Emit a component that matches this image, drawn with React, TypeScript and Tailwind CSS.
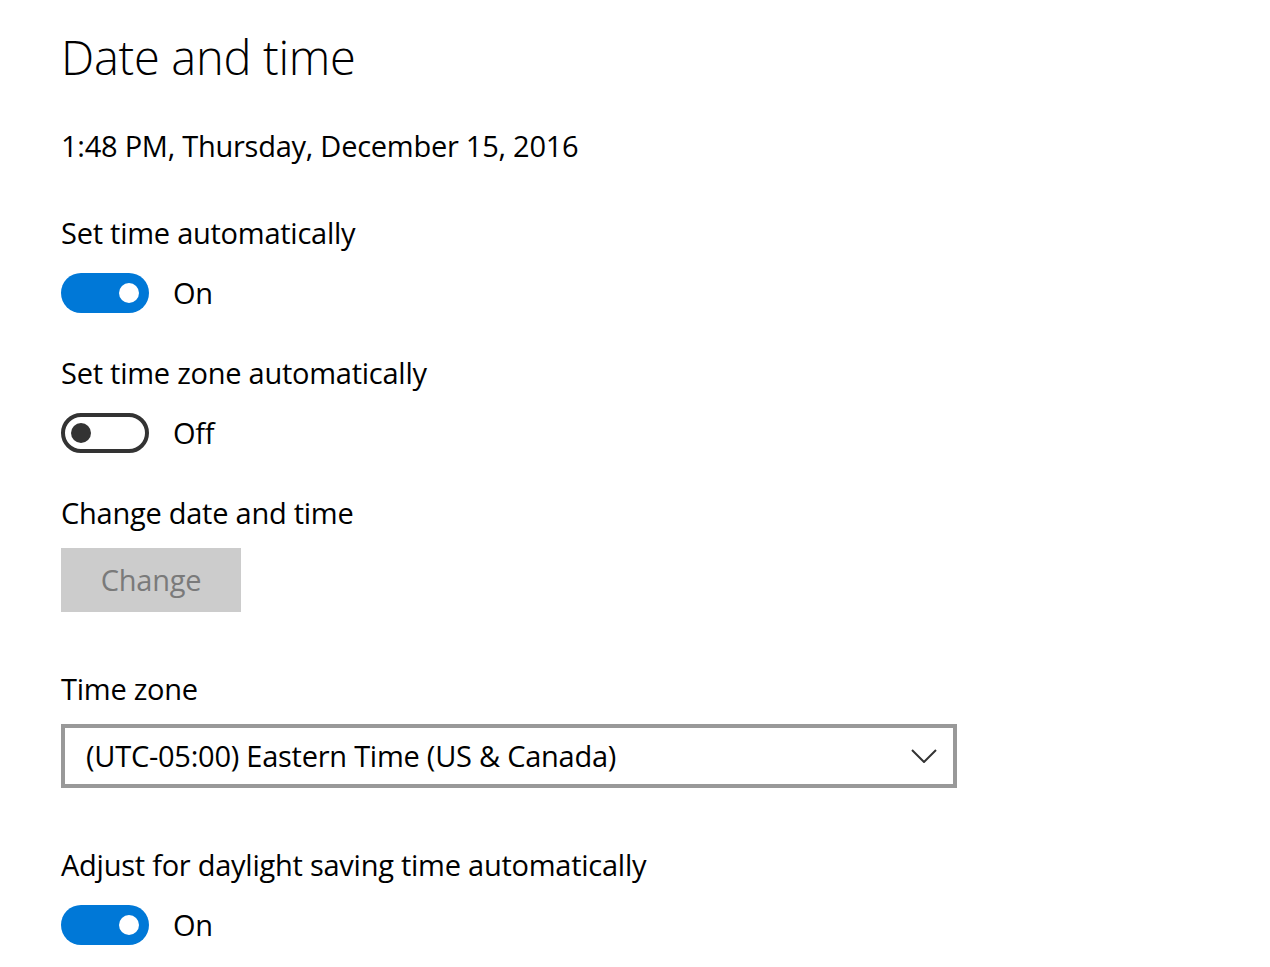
import React from 'react';

const font = { fontFamily: '"Open Sans", "Noto Sans", sans-serif' };

function Toggle({ on }: { on: boolean }) {
  if (on) {
    return (
      <div className="flex h-[40px] w-[88px] items-center justify-end rounded-full bg-[#0078d7] pr-[10px]">
        <div className="h-[20px] w-[20px] rounded-full bg-white" />
      </div>
    );
  }
  return (
    <div className="flex h-[40px] w-[88px] items-center rounded-full border-4 border-[#333333] pl-[6px]">
      <div className="h-[20px] w-[20px] rounded-full bg-[#333333]" />
    </div>
  );
}

function ToggleRow({ on, className }: { on: boolean; className: string }) {
  return (
    <div className={`flex h-[40px] items-center gap-[24px] ${className}`}>
      <Toggle on={on} />
      <span className="pb-[2px] text-[29px] leading-none tracking-[-0.25px] text-black">{on ? 'On' : 'Off'}</span>
    </div>
  );
}

function Label({ text, className }: { text: string; className: string }) {
  return (
    <div className={`flex h-[40px] items-center pb-[2px] text-[29px] leading-none tracking-[-0.25px] text-black ${className}`}>
      {text}
    </div>
  );
}

export default function App() {
  return (
    <div className="min-h-[967px] w-[1270px] bg-white pl-[61px] pt-[27px]" style={font}>
      <h1 className="flex h-[60px] items-center text-[47px] font-light leading-none tracking-[-0.3px] text-black">
        Date and time
      </h1>

      <Label text="1:48 PM, Thursday, December 15, 2016" className="mt-[39px]" />

      <Label text="Set time automatically" className="mt-[47px]" />
      <ToggleRow on={true} className="mt-[20px]" />

      <Label text="Set time zone automatically" className="mt-[40px]" />
      <ToggleRow on={false} className="mt-[20px]" />

      <Label text="Change date and time" className="mt-[40px]" />
      <button
        type="button"
        disabled
        className="mt-[15px] flex h-[64px] w-[180px] items-center justify-center bg-[#cccccc] pb-[2px] text-[29px] leading-none tracking-[-0.25px] text-[#7a7a7a]"
      >
        Change
      </button>

      <Label text="Time zone" className="mt-[57px]" />
      <div className="mt-[15px] flex h-[64px] w-[896px] items-center justify-between border-4 border-[#999999] pl-[21px] pr-[16px]">
        <span className="pb-[2px] text-[29px] leading-none tracking-[-0.25px] text-black">
          (UTC-05:00) Eastern Time (US &amp; Canada)
        </span>
        <svg width="26" height="14" viewBox="0 0 26 14" fill="none">
          <path d="M1 1 L13 13 L25 1" stroke="#333333" strokeWidth="2" />
        </svg>
      </div>

      <Label text="Adjust for daylight saving time automatically" className="mt-[57px]" />
      <ToggleRow on={true} className="mt-[20px]" />
    </div>
  );
}
